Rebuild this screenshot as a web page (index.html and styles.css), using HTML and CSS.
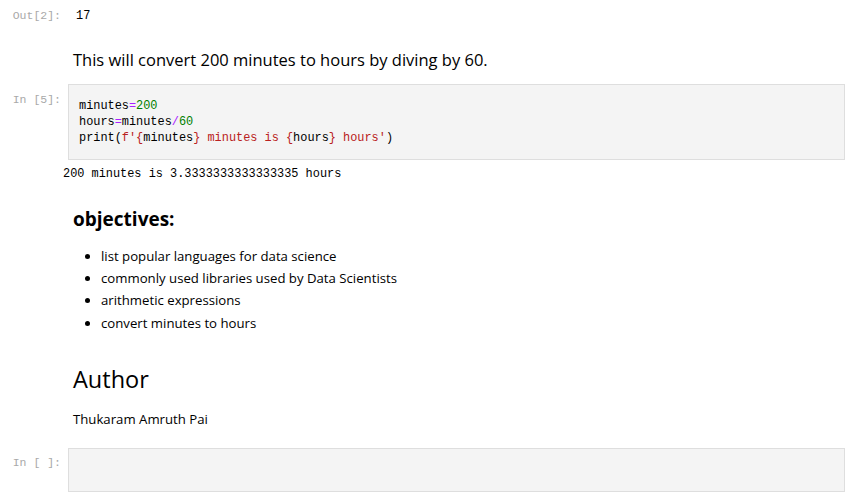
FILE: index.html
```html
<!DOCTYPE html>
<html>
<head>
<meta charset="utf-8">
<link rel="stylesheet" href="styles.css">
</head>
<body>
<div class="notebook">
  <div class="cell out-cell">
    <div class="prompt">Out[2]:</div>
    <div class="output-text">17</div>
  </div>

  <div class="cell md-cell">
    <div class="prompt"></div>
    <div class="md">
      <p class="lead">This will convert 200 minutes to hours by diving by 60.</p>
    </div>
  </div>

  <div class="cell code-cell">
    <div class="prompt in">In&nbsp;[5]:</div>
    <div class="input-area">
<pre><span class="n">minutes</span><span class="o">=</span><span class="m">200</span>
<span class="n">hours</span><span class="o">=</span><span class="n">minutes</span><span class="o">/</span><span class="m">60</span>
<span class="n">print</span>(<span class="s">f'{</span><span class="n">minutes</span><span class="s">} minutes is {</span><span class="n">hours</span><span class="s">} hours'</span>)</pre>
    </div>
  </div>
  <div class="cell stream-cell">
    <div class="prompt narrow"></div>
    <pre class="stream">200 minutes is 3.3333333333333335 hours</pre>
  </div>

  <div class="cell md-cell">
    <div class="prompt"></div>
    <div class="md">
      <h3 class="h3">objectives:</h3>
      <ul class="list">
        <li>list popular languages for data science</li>
        <li>commonly used libraries used by Data Scientists</li>
        <li>arithmetic expressions</li>
        <li>convert minutes to hours</li>
      </ul>
      <h2 class="h2">Author</h2>
      <p class="author">Thukaram Amruth Pai</p>
    </div>
  </div>

  <div class="cell code-cell empty">
    <div class="prompt in">In&nbsp;[&nbsp;]:</div>
    <div class="input-area blank"></div>
  </div>
</div>
</body>
</html>
```
FILE: styles.css
```css
html, body {
  margin: 0;
  padding: 0;
  background: #ffffff;
}
.notebook {
  width: 855px;
  padding-right: 10px;
  box-sizing: border-box;
  font-family: "Open Sans", "Noto Sans", sans-serif;
  color: #000;
}
.cell {
  display: flex;
  align-items: flex-start;
}
.prompt {
  width: 68px;
  flex: none;
  box-sizing: border-box;
  padding-right: 7px;
  text-align: right;
  font-family: "Liberation Mono", monospace;
  font-size: 11.5px;
  color: #a9a9a9;
  line-height: 16px;
}
.out-cell {
  padding-top: 8px;
}
.output-text {
  font-family: "Liberation Mono", monospace;
  font-size: 11.9px;
  line-height: 16px;
  padding-left: 8px;
  color: #000;
}
.md {
  flex: 1;
  padding-left: 5px;
}
.lead {
  margin: 0;
  padding-top: 24px;
  font-size: 16.5px;
  line-height: 24px;
  font-weight: 500;
  color: #000;
}
.code-cell {
  margin-top: 12px;
}
.code-cell .prompt {
  padding-top: 8px;
}
.input-area {
  flex: 1;
  background: #f4f4f4;
  border: 1px solid #dedede;
  box-sizing: border-box;
  height: 76px;
}
.input-area pre {
  margin: 0;
  padding: 13px 0 0 10px;
  font-family: "Liberation Mono", monospace;
  font-size: 11.9px;
  line-height: 16px;
  color: #000;
}
.n { color: #000; }
.o { color: #aa22ff; }
.m { color: #008000; }
.s { color: #ba2121; }
.stream-cell .prompt.narrow {
  width: 63px;
}
.stream {
  margin: 0;
  padding-top: 6px;
  font-family: "Liberation Mono", monospace;
  font-size: 11.9px;
  line-height: 16px;
  color: #000;
}
.h3 {
  margin: 0;
  padding-top: 24px;
  font-size: 19px;
  line-height: 26px;
  font-weight: 700;
}
.list {
  margin: 13px 0 0 0;
  padding-left: 28px;
  font-size: 13.2px;
  line-height: 22.2px;
}
.list li {
  padding: 0;
}
.h2 {
  margin: 0;
  padding-top: 29px;
  font-size: 23.5px;
  line-height: 32px;
  font-weight: 500;
}
.author {
  margin: 0;
  padding-top: 14px;
  font-size: 13.2px;
  line-height: 20px;
}
.empty {
  margin-top: 19px;
}
.empty .prompt {
  padding-top: 7px;
}
.input-area.blank {
  height: 44px;
}
```
